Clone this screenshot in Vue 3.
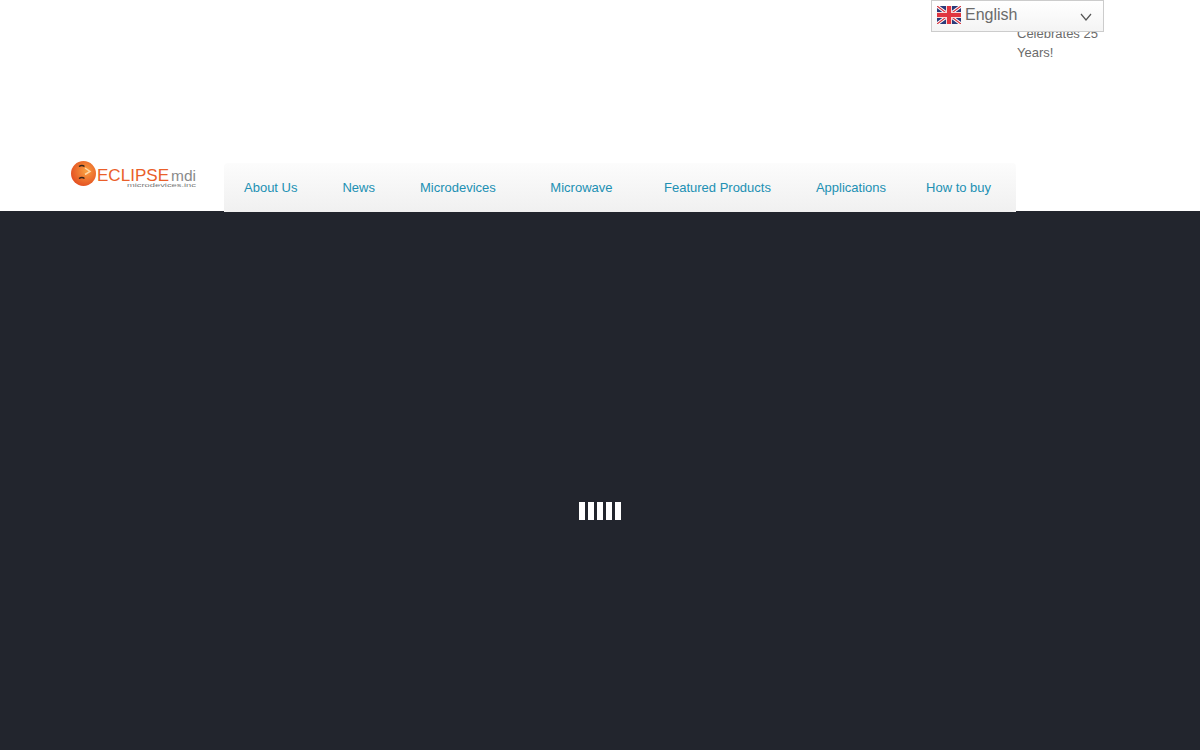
<template>
  <div class="page">
    <header class="header">
      <div class="top">
        <p class="notice">Celebrates 25 Years!</p>
        <div class="lang">
          <svg class="lang__flag" width="24" height="18" viewBox="0 0 24 18">
            <rect width="24" height="18" fill="#2b3a7a" />
            <path d="M0 0 L24 18 M24 0 L0 18" stroke="#fff" stroke-width="3.2" />
            <path d="M0 0 L24 18 M24 0 L0 18" stroke="#d8343f" stroke-width="1.2" />
            <path d="M12 0 V18 M0 9 H24" stroke="#f6d9d9" stroke-width="6" />
            <path d="M12 0 V18 M0 9 H24" stroke="#e0353f" stroke-width="4" />
          </svg>
          <span class="lang__label">English</span>
          <svg class="lang__arrow" width="12" height="8" viewBox="0 0 12 8">
            <path d="M1 1 L6 7 L11 1" fill="none" stroke="#555" stroke-width="1.2" />
          </svg>
        </div>
      </div>

      <div class="bar">
        <svg class="logo" width="127" height="30" viewBox="0 0 127 30">
          <defs>
            <radialGradient id="ball" cx="0.6" cy="0.4" r="0.7">
              <stop offset="0" stop-color="#f9a040" />
              <stop offset="1" stop-color="#e2481f" />
            </radialGradient>
          </defs>
          <circle cx="13.5" cy="13.5" r="12.5" fill="url(#ball)" />
          <path d="M9 6.5 Q12 4.5 14.5 6.5 M9 18.5 Q12 16.5 14.5 18.5" fill="none" stroke="#33241c" stroke-width="1.5" />
          <path d="M15 8 L20 11.5 L15 14.5" fill="none" stroke="#ffd9a8" stroke-width="1.5" />
          <text x="27" y="20.5" class="logo__name" textLength="72" lengthAdjust="spacingAndGlyphs">ECLIPSE</text>
          <text x="101" y="20.5" class="logo__mdi" textLength="25" lengthAdjust="spacingAndGlyphs">mdi</text>
          <text x="57" y="27" class="logo__sub" textLength="69" lengthAdjust="spacingAndGlyphs">microdevices.inc</text>
        </svg>

        <nav class="nav">
          <a v-for="item in menu" :key="item.label" class="nav__item" :class="item.cls">{{ item.label }}</a>
        </nav>
      </div>
    </header>

    <main class="stage">
      <div class="loader">
        <span v-for="n in 5" :key="n"></span>
      </div>
    </main>
  </div>
</template>

<script setup>
const menu = [
  { label: 'About Us' },
  { label: 'News' },
  { label: 'Microdevices', cls: 'nav__item--wide' },
  { label: 'Microwave', cls: 'nav__item--mid' },
  { label: 'Featured Products' },
  { label: 'Applications', cls: 'nav__item--tight' },
  { label: 'How to buy' },
]
</script>

<style>
html,
body {
  margin: 0;
  background: #fff;
}
</style>

<style scoped>
.page {
  display: flex;
  flex-direction: column;
  height: 750px;
  overflow: hidden;
  font-family: "Liberation Sans", Arial, sans-serif;
}

.header {
  position: relative;
  z-index: 1;
  display: flex;
  flex-direction: column;
  justify-content: space-between;
  height: 211px;
  background: #fff;
}

.top {
  position: relative;
  display: flex;
  justify-content: flex-end;
  padding-right: 96px;
}

.notice {
  width: 87px;
  margin: 0;
  padding-top: 24px;
  font-size: 13px;
  line-height: 19px;
  color: #6b6b6b;
}

.lang {
  position: absolute;
  top: 0;
  left: 931px;
  box-sizing: border-box;
  display: flex;
  align-items: center;
  width: 173px;
  height: 32px;
  padding: 0 11px 2px 5px;
  border: 1px solid #ccc;
  background: linear-gradient(#fff, #f4f4f4);
}

.lang__label {
  flex: 1;
  margin-left: 4px;
  font-size: 16px;
  color: #6b6b6b;
}

.lang__arrow {
  margin-top: 3px;
}

.bar {
  display: flex;
  align-items: flex-end;
  padding-left: 70px;
  margin-bottom: -1px;
}

.logo {
  flex: none;
  margin: 0 27px 22px 0;
}

.logo__name {
  font-size: 17px;
  fill: #ea5f2a;
}

.logo__mdi {
  font-size: 15px;
  fill: #8a8a8a;
}

.logo__sub {
  font-size: 6px;
  fill: #777;
}

.nav {
  display: flex;
  align-items: center;
  gap: 45px;
  width: 792px;
  height: 49px;
  box-sizing: border-box;
  padding-left: 20px;
  background: linear-gradient(#fcfcfc, #f0f0f0);
  border-radius: 4px 4px 0 0;
}

.nav__item {
  font-size: 13px;
  color: #2190b3;
  white-space: nowrap;
}

.nav__item--wide {
  margin-right: 9.5px;
}

.nav__item--mid {
  margin-right: 6.5px;
}

.nav__item--tight {
  margin-right: -5px;
}

.stage {
  flex: 1;
  display: flex;
  justify-content: center;
  align-items: flex-start;
  padding-top: 291px;
  background: #22252d;
}

.loader {
  display: flex;
  gap: 3px;
}

.loader span {
  width: 6px;
  height: 18px;
  background: #fff;
}
</style>
